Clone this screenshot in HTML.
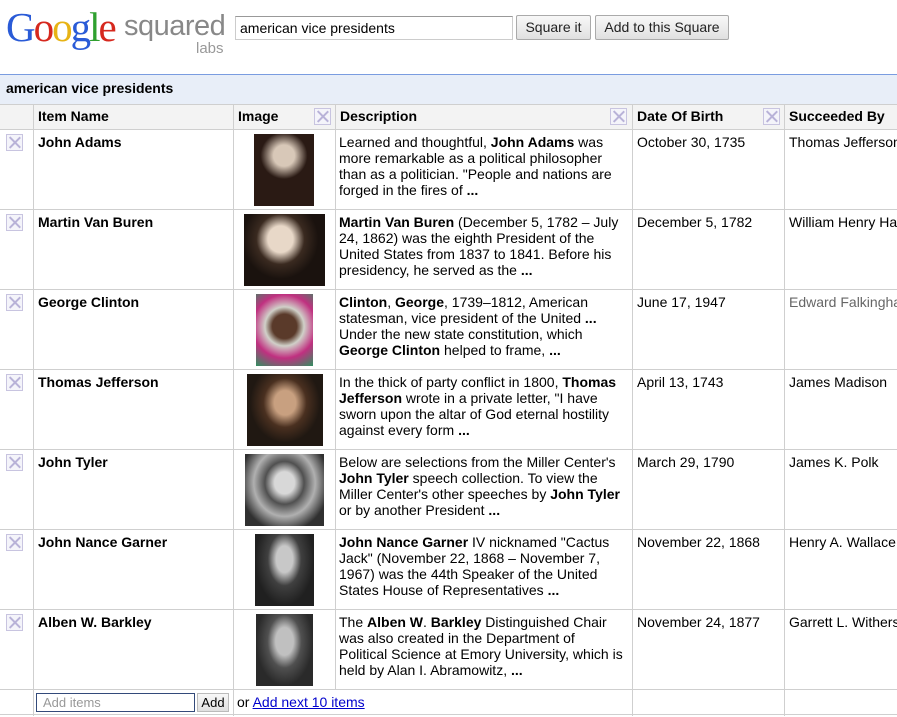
<!DOCTYPE html>
<html><head><meta charset="utf-8"><style>
*{margin:0;padding:0;box-sizing:border-box}
body{width:897px;height:717px;overflow:hidden;background:#fff;font-family:"Liberation Sans",Arial,sans-serif;font-size:14px;color:#000;position:relative}
.a{position:absolute}
.vl{position:absolute;width:1px;background:#cfcfcf}
.hl{position:absolute;height:1px;background:#cfcfcf;left:0;width:897px}
.x{position:absolute;width:17px;height:17px;border:1px solid #c8c4e0;background:#f4f4fa}
.x:before,.x:after{content:"";position:absolute;left:7px;top:0px;width:1.6px;height:15px;background:#b8b2d8}
.x:before{transform:rotate(45deg)}.x:after{transform:rotate(-45deg)}
.t{position:absolute;line-height:16px}
.d{white-space:nowrap}
.b{font-weight:bold}
.img{position:absolute}
.btn{position:absolute;top:15px;height:25px;border:1px solid #aaa;border-radius:2px;background:linear-gradient(#f8f8f8,#e0e0e0);font-size:14px;line-height:23px;text-align:center;color:#222}
</style></head><body>
<div class="a" style="left:6px;top:5px;font-family:'Liberation Serif',serif;font-size:41px;line-height:44px;letter-spacing:-2px">
<span style="color:#2a5bd7">G</span><span style="color:#d6281e">o</span><span style="color:#e7b315">o</span><span style="color:#2a5bd7">g</span><span style="color:#2fa02f">l</span><span style="color:#d6281e">e</span></div>
<div class="a" style="left:124px;top:9px;font-size:29px;line-height:34px;color:#888;letter-spacing:-0.5px">squared</div>
<div class="a" style="left:196px;top:40px;font-size:15px;color:#999">labs</div>
<div class="a" style="left:235px;top:16px;width:278px;height:24px;border:1px solid #ccc;border-top-color:#999;padding:2px 4px;font-size:14px;line-height:18px">american vice presidents</div>
<div class="btn" style="left:516px;width:75px">Square it</div>
<div class="btn" style="left:595px;width:134px">Add to this Square</div>

<div class="a" style="left:0;top:74px;width:897px;height:30px;background:#e8eef8;border-top:1px solid #7a9ce0"></div>
<div class="t b" style="left:6px;top:80px;font-size:14px">american vice presidents</div>
<div class="a" style="left:0;top:104px;width:897px;height:25px;background:#f3f3f3"></div>
<div class="hl" style="top:104px"></div>
<div class="hl" style="top:129px"></div>
<div class="hl" style="top:209px"></div>
<div class="hl" style="top:289px"></div>
<div class="hl" style="top:369px"></div>
<div class="hl" style="top:449px"></div>
<div class="hl" style="top:529px"></div>
<div class="hl" style="top:609px"></div>
<div class="hl" style="top:689px"></div>
<div class="hl" style="top:714px"></div>
<div class="vl" style="left:33px;top:104px;height:612px"></div>
<div class="vl" style="left:233px;top:104px;height:612px"></div>
<div class="vl" style="left:335px;top:104px;height:586px"></div>
<div class="vl" style="left:632px;top:104px;height:612px"></div>
<div class="vl" style="left:784px;top:104px;height:612px"></div>

<div class="t b" style="left:38px;top:108px">Item Name</div>
<div class="t b" style="left:238px;top:108px">Image</div><div class="x" style="left:314px;top:108px"></div>
<div class="t b" style="left:340px;top:108px">Description</div><div class="x" style="left:610px;top:108px"></div>
<div class="t b" style="left:637px;top:108px">Date Of Birth</div><div class="x" style="left:763px;top:108px"></div>
<div class="t b" style="left:789px;top:108px;white-space:nowrap">Succeeded By</div>

<div class="x" style="left:6px;top:134px"></div>
<div class="t b" style="left:38px;top:134px">John Adams</div>
<div class="img" style="left:254px;top:134px;width:60px;height:72px;background:radial-gradient(circle at 50% 30%,#d8c8b8 0 18%,#2a1a14 40%),#6a1a14"></div>
<div class="t d" style="left:339px;top:134px">Learned and thoughtful, <b>John Adams</b> was<br>more remarkable as a political philosopher<br>than as a politician. "People and nations are<br>forged in the fires of <b>...</b></div>
<div class="t" style="left:637px;top:134px">October 30, 1735</div>
<div class="t" style="left:789px;top:134px;white-space:nowrap">Thomas Jefferson</div>

<div class="x" style="left:6px;top:214px"></div>
<div class="t b" style="left:38px;top:214px">Martin Van Buren</div>
<div class="img" style="left:244px;top:214px;width:81px;height:72px;background:radial-gradient(ellipse at 45% 35%,#e8d8c8 0 20%,#3a2a20 38%,#1a120e 60%)"></div>
<div class="t d" style="left:339px;top:214px"><b>Martin Van Buren</b> (December 5, 1782 – July<br>24, 1862) was the eighth President of the<br>United States from 1837 to 1841. Before his<br>presidency, he served as the <b>...</b></div>
<div class="t" style="left:637px;top:214px">December 5, 1782</div>
<div class="t" style="left:789px;top:214px;white-space:nowrap">William Henry Harrison</div>

<div class="x" style="left:6px;top:294px"></div>
<div class="t b" style="left:38px;top:294px">George Clinton</div>
<div class="img" style="left:256px;top:294px;width:57px;height:72px;background:radial-gradient(circle at 50% 45%,#5a3a2a 0 25%,#d0d0c8 40%,#c03080 65%,#309060)"></div>
<div class="t d" style="left:339px;top:294px"><b>Clinton</b>, <b>George</b>, 1739–1812, American<br>statesman, vice president of the United <b>...</b><br>Under the new state constitution, which<br><b>George Clinton</b> helped to frame, <b>...</b></div>
<div class="t" style="left:637px;top:294px">June 17, 1947</div>
<div class="t" style="left:789px;top:294px;white-space:nowrap;color:#666">Edward Falkingham</div>

<div class="x" style="left:6px;top:374px"></div>
<div class="t b" style="left:38px;top:374px">Thomas Jefferson</div>
<div class="img" style="left:247px;top:374px;width:76px;height:72px;background:radial-gradient(ellipse at 50% 40%,#c8a080 0 20%,#4a3020 40%,#201812 65%)"></div>
<div class="t d" style="left:339px;top:374px">In the thick of party conflict in 1800, <b>Thomas</b><br><b>Jefferson</b> wrote in a private letter, "I have<br>sworn upon the altar of God eternal hostility<br>against every form <b>...</b></div>
<div class="t" style="left:637px;top:374px">April 13, 1743</div>
<div class="t" style="left:789px;top:374px;white-space:nowrap">James Madison</div>

<div class="x" style="left:6px;top:454px"></div>
<div class="t b" style="left:38px;top:454px">John Tyler</div>
<div class="img" style="left:245px;top:454px;width:79px;height:72px;background:radial-gradient(ellipse at 50% 40%,#d8d8d8 0 18%,#505050 35%,#b0b0b0 55%,#303030 80%)"></div>
<div class="t d" style="left:339px;top:454px">Below are selections from the Miller Center's<br><b>John Tyler</b> speech collection. To view the<br>Miller Center's other speeches by <b>John Tyler</b><br>or by another President <b>...</b></div>
<div class="t" style="left:637px;top:454px">March 29, 1790</div>
<div class="t" style="left:789px;top:454px;white-space:nowrap">James K. Polk</div>

<div class="x" style="left:6px;top:534px"></div>
<div class="t b" style="left:38px;top:534px">John Nance Garner</div>
<div class="img" style="left:255px;top:534px;width:59px;height:72px;background:radial-gradient(ellipse at 50% 35%,#c8c8c8 0 20%,#404040 40%,#202020 70%)"></div>
<div class="t d" style="left:339px;top:534px"><b>John Nance Garner</b> IV nicknamed "Cactus<br>Jack" (November 22, 1868 – November 7,<br>1967) was the 44th Speaker of the United<br>States House of Representatives <b>...</b></div>
<div class="t" style="left:637px;top:534px">November 22, 1868</div>
<div class="t" style="left:789px;top:534px;white-space:nowrap">Henry A. Wallace</div>

<div class="x" style="left:6px;top:614px"></div>
<div class="t b" style="left:38px;top:614px">Alben W. Barkley</div>
<div class="img" style="left:256px;top:614px;width:57px;height:72px;background:radial-gradient(ellipse at 50% 38%,#c0c0c0 0 22%,#505050 42%,#2a2a2a 70%)"></div>
<div class="t d" style="left:339px;top:614px">The <b>Alben W</b>. <b>Barkley</b> Distinguished Chair<br>was also created in the Department of<br>Political Science at Emory University, which is<br>held by Alan I. Abramowitz, <b>...</b></div>
<div class="t" style="left:637px;top:614px">November 24, 1877</div>
<div class="t" style="left:789px;top:614px;white-space:nowrap">Garrett L. Withers</div>

<div class="a" style="left:36px;top:693px;width:159px;height:19px;border:1px solid #334a7a;font-size:13px;line-height:17px;color:#999;padding-left:6px">Add items</div>
<div class="a" style="left:197px;top:693px;width:32px;height:19px;border:1px solid #bbb;background:linear-gradient(#f8f8f8,#e0e0e0);font-size:13px;line-height:17px;text-align:center">Add</div>
<div class="t" style="left:237px;top:694px">or <span style="color:#00c;text-decoration:underline">Add next 10 items</span></div>
</body></html>
